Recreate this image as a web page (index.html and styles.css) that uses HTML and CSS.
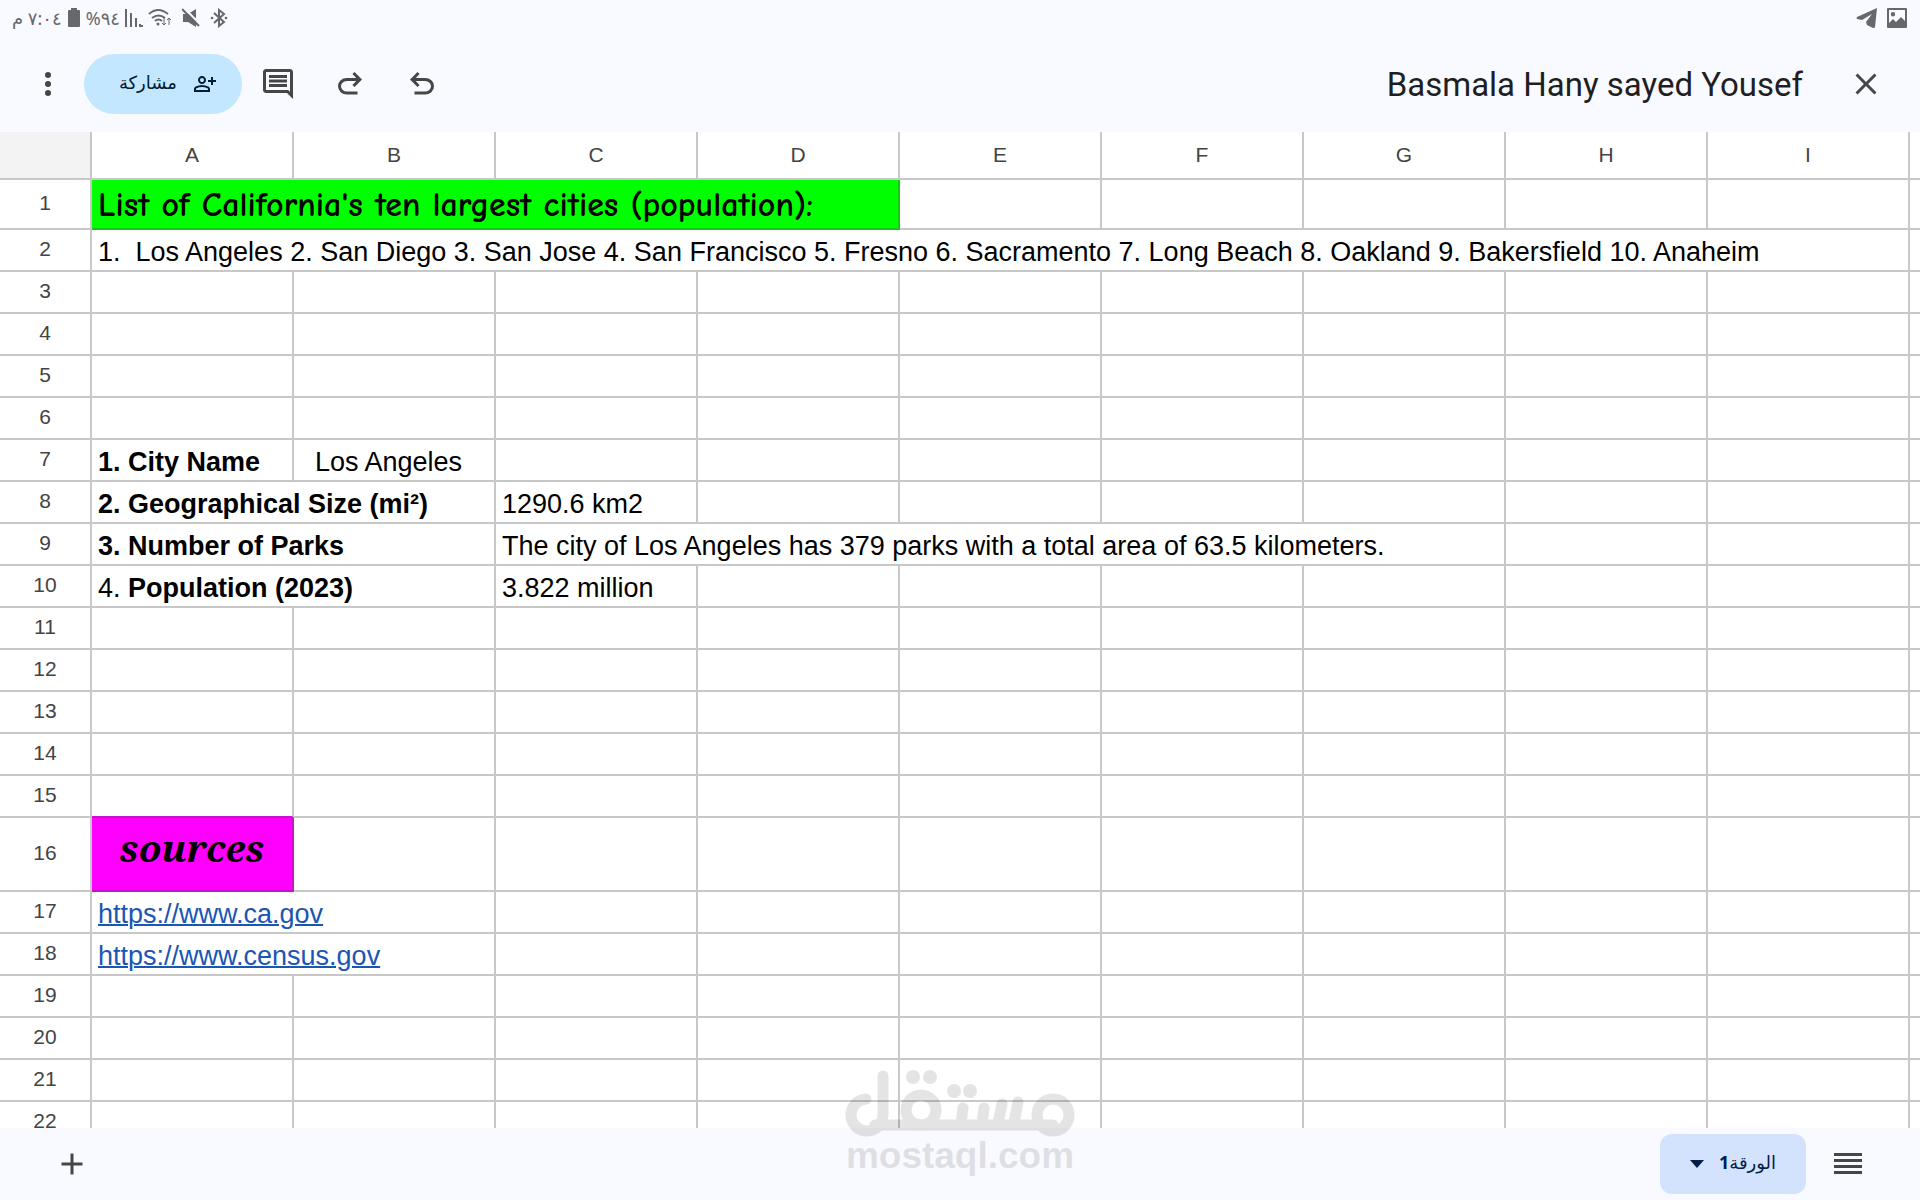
FILE: index.html
```
<!DOCTYPE html>
<html lang="ar" dir="rtl">
<head>
  <meta charset="utf-8">
  <title>Basmala Hany sayed Yousef</title>
  <link rel="stylesheet" href="styles.css">
</head>
<body>
  <div class="status-bar">
    <div class="status-group">
      <svg width="22" height="22" viewBox="0 0 22 22"><path fill-rule="evenodd" d="M2 1h18q1 0 1 1v18q0 1-1 1H2q-1 0-1-1V2q0-1 1-1zM3 3v13l4-4 3 3 5-5 4 4V3zM7 5a2.200 2.200 0 1 1 0 4.400a2.200 2.200 0 0 1 0-4.400z"/></svg>
      <svg width="22" height="22" viewBox="0 0 22 22"><path d="M21 1L1 10q-1 1 0 2l5 1L16 7l-6 8 1 3 6 3q2 0 2-1z"/></svg>
    </div>
    <div class="status-group left">
      <svg width="18" height="20" viewBox="0 0 18 20"><path class="line" d="M4 5l10 9-5 4V2l5 4-10 9"/><circle cx="2" cy="10" r="1.300"/><circle cx="16" cy="10" r="1.300"/></svg>
      <svg class="mute" width="18" height="20" viewBox="0 0 18 20"><path d="M1 6h5l8-5v18l-8-5H1z"/><path class="slash" d="M2 0l17 17"/><path class="line" d="M0 1l17 17"/></svg>
      <svg width="24" height="20" viewBox="0 0 24 20"><path class="line" d="M1 6q9-8 19 0M4 10q6.500-5 13 0M7 13q3.500-3 7 0"/><circle cx="10" cy="16" r="1.500"/><path class="thin" d="M16 10v7m-2-2l2 2 2-2M21 17v-7m-2 2l2-2 2 2"/></svg>
      <svg class="signal" width="18" height="18" viewBox="0 0 18 18"><path class="line" d="M1 0v18M6 4v14M11 9v9M15 15v3M17 16v2"/></svg>
      <span>٩٤%</span>
      <svg width="14" height="20" viewBox="0 0 14 20"><path d="M4 0h6v2h2q1 0 1 1v15q0 1-1 1H2q-1 0-1-1V3q0-1 1-1h2z"/></svg>
      <span>٧:٠٤ م</span>
    </div>
  </div>

  <header class="toolbar">
    <button class="icon-btn" aria-label="إغلاق">
      <svg viewBox="0 0 24 24"><path d="M19 6.410L17.590 5 12 10.590 6.410 5 5 6.410 10.590 12 5 17.590 6.410 19 12 13.410 17.590 19 19 17.590 13.410 12z"/></svg>
    </button>
    <h1>Basmala Hany sayed Yousef</h1>
    <button class="icon-btn" aria-label="تراجع">
      <svg viewBox="0 -960 960 960"><path d="M280-200v-80h284q63 0 109.500-40T720-420q0-60-46.500-100T564-560H312l104 104-56 56-200-200 200-200 56 56-104 104h252q97 0 166.500 63T800-420q0 94-69.500 157T564-200H280Z"/></svg>
    </button>
    <button class="icon-btn" aria-label="إعادة">
      <svg viewBox="0 -960 960 960"><path d="M396-200q-97 0-166.500-63T160-420q0-94 69.500-157T396-640h252L544-744l56-56 200 200-200 200-56-56 104-104H396q-63 0-109.500 40T240-420q0 60 46.500 100T396-280h284v80H396Z"/></svg>
    </button>
    <button class="icon-btn" aria-label="تعليقات">
      <svg viewBox="0 0 24 24"><path d="M21.990 4c0-1.100-.89-2-1.990-2H4c-1.100 0-2 .9-2 2v12c0 1.100.9 2 2 2h14l4 4-.01-18zM20 4v13.170L18.830 16H4V4h16zM6 12h12v2H6zm0-3h12v2H6zm0-3h12v2H6z"/></svg>
    </button>
    <button class="share-btn">
      <svg viewBox="0 -960 960 960"><path d="M720-440v-120H600v-80h120v-120h80v120h120v80H800v120h-80Zm-360-40q-66 0-113-47t-47-113q0-66 47-113t113-47q66 0 113 47t47 113q0 66-47 113t-113 47ZM40-160v-112q0-34 17.500-62.500T104-378q62-31 126-46.500T360-440q66 0 130 15.500T616-378q29 15 46.500 43.500T680-272v112H40Zm80-80h480v-32q0-11-5.500-20T580-306q-54-27-109-40.500T360-360q-56 0-111 13.500T140-306q-9 5-14.500 14t-5.500 20v32Zm240-320q33 0 56.500-23.500T440-640q0-33-23.500-56.500T360-720q-33 0-56.500 23.500T280-640q0 33 23.500 56.500T360-560Z"/></svg>
      <span>مشاركة</span>
    </button>
    <button class="icon-btn" aria-label="المزيد">
      <svg viewBox="0 0 24 24"><circle cx="12" cy="6" r="2"/><circle cx="12" cy="12" r="2"/><circle cx="12" cy="18" r="2"/></svg>
    </button>
  </header>

  <main class="sheet" dir="ltr" lang="en">
    <table>
      <colgroup>
        <col class="col-num">
        <col class="col-data" span="9">
        <col>
      </colgroup>
      <thead>
        <tr><td class="corner"></td><th>A</th><th>B</th><th>C</th><th>D</th><th>E</th><th>F</th><th>G</th><th>H</th><th>I</th><th></th></tr>
      </thead>
      <tbody>
        <tr class="title-row"><th>1</th><td class="list-title" colspan="4">List of California's ten largest cities (population):</td><td></td><td></td><td></td><td></td><td></td><td></td></tr>
        <tr><th>2</th><td colspan="9">1.&nbsp; Los Angeles 2. San Diego 3. San Jose 4. San Francisco 5. Fresno 6. Sacramento 7. Long Beach 8. Oakland 9. Bakersfield 10. Anaheim</td><td></td></tr>
        <tr><th>3</th><td></td><td></td><td></td><td></td><td></td><td></td><td></td><td></td><td></td><td></td></tr>
        <tr><th>4</th><td></td><td></td><td></td><td></td><td></td><td></td><td></td><td></td><td></td><td></td></tr>
        <tr><th>5</th><td></td><td></td><td></td><td></td><td></td><td></td><td></td><td></td><td></td><td></td></tr>
        <tr><th>6</th><td></td><td></td><td></td><td></td><td></td><td></td><td></td><td></td><td></td><td></td></tr>
        <tr><th>7</th><td><b>1. City Name</b></td><td>&nbsp;&nbsp;Los Angeles</td><td></td><td></td><td></td><td></td><td></td><td></td><td></td><td></td></tr>
        <tr><th>8</th><td colspan="2"><b>2. Geographical Size (mi²)</b></td><td>1290.6 km2</td><td></td><td></td><td></td><td></td><td></td><td></td><td></td></tr>
        <tr><th>9</th><td colspan="2"><b>3. Number of Parks</b></td><td colspan="5">The city of Los Angeles has 379 parks with a total area of 63.5 kilometers.</td><td></td><td></td><td></td></tr>
        <tr><th>10</th><td colspan="2">4. <b>Population (2023)</b></td><td>3.822 million</td><td></td><td></td><td></td><td></td><td></td><td></td><td></td></tr>
        <tr><th>11</th><td></td><td></td><td></td><td></td><td></td><td></td><td></td><td></td><td></td><td></td></tr>
        <tr><th>12</th><td></td><td></td><td></td><td></td><td></td><td></td><td></td><td></td><td></td><td></td></tr>
        <tr><th>13</th><td></td><td></td><td></td><td></td><td></td><td></td><td></td><td></td><td></td><td></td></tr>
        <tr><th>14</th><td></td><td></td><td></td><td></td><td></td><td></td><td></td><td></td><td></td><td></td></tr>
        <tr><th>15</th><td class="above-sources"></td><td></td><td></td><td></td><td></td><td></td><td></td><td></td><td></td><td></td></tr>
        <tr class="sources-row"><th>16</th><td class="sources">sources</td><td></td><td></td><td></td><td></td><td></td><td></td><td></td><td></td><td></td></tr>
        <tr><th>17</th><td colspan="2"><a href="https://www.ca.gov">https://www.ca.gov</a></td><td></td><td></td><td></td><td></td><td></td><td></td><td></td><td></td></tr>
        <tr><th>18</th><td colspan="2"><a href="https://www.census.gov">https://www.census.gov</a></td><td></td><td></td><td></td><td></td><td></td><td></td><td></td><td></td></tr>
        <tr><th>19</th><td></td><td></td><td></td><td></td><td></td><td></td><td></td><td></td><td></td><td></td></tr>
        <tr><th>20</th><td></td><td></td><td></td><td></td><td></td><td></td><td></td><td></td><td></td><td></td></tr>
        <tr><th>21</th><td></td><td></td><td></td><td></td><td></td><td></td><td></td><td></td><td></td><td></td></tr>
        <tr><th>22</th><td></td><td></td><td></td><td></td><td></td><td></td><td></td><td></td><td></td><td></td></tr>
      </tbody>
    </table>
  </main>

  <footer class="tabs">
    <button class="icon-btn" aria-label="كل الأوراق">
      <svg viewBox="0 0 36 36"><path d="M4 7h28v3H4zM4 13h28v3H4zM4 19h28v3H4zM4 25h28v3H4z"/></svg>
    </button>
    <button class="sheet-tab">
      <span>الورقة<b>1</b></span>
      <svg width="14" height="8" viewBox="0 0 14 8"><path d="M0 0h14L7 8z"/></svg>
    </button>
    <button class="icon-btn add" aria-label="إضافة ورقة">
      <svg viewBox="0 0 24 24"><path d="M19 13h-6v6h-2v-6H5v-2h6V5h2v6h6v2z"/></svg>
    </button>
  </footer>

  <div class="watermark" dir="ltr">
    <svg width="230" height="68" viewBox="0 0 230 68">
      <g class="strokes">
        <path d="M21 29A16 16 0 1 0 38 45V6"/>
        <path d="M30 55H208"/>
        <circle cx="76" cy="40" r="15"/>
        <circle cx="208" cy="45" r="16"/>
        <path d="M116 53l2-15M137 53l2-15M153 53l4-19M169 53l4-21"/>
      </g>
      <circle cx="68" cy="7" r="7"/><circle cx="85" cy="7" r="7"/>
      <circle cx="109" cy="21" r="7"/><circle cx="125" cy="21" r="7"/>
    </svg>
    <span>mostaql.com</span>
  </div>
</body>
</html>
```
FILE: styles.css
```
:root {
  --chrome: #f9faff;
  --grid: #c8c8c8;
  --icon: #444746;
  --status: #66686b;
  --navy: #041e49;
}

* {
  box-sizing: border-box;
}

body {
  margin: 0;
  height: 100vh;
  display: flex;
  flex-direction: column;
  overflow: hidden;
  position: relative;
  background: var(--chrome);
  font-family: "Liberation Sans", Arial, sans-serif;
}

button {
  border: none;
  background: none;
  padding: 0;
  font: inherit;
  cursor: pointer;
}

/* Status bar */
.status-bar {
  display: flex;
  justify-content: space-between;
  align-items: center;
  height: 36px;
  padding: 0 12px;
  color: var(--status);
  font-family: "Noto Sans", "DejaVu Sans", sans-serif;
  font-size: 18px;
  line-height: 36px;
}

.status-group {
  display: flex;
  align-items: center;
  gap: 8px;
}

.status-group.left {
  gap: 5px;
}

.status-group svg {
  fill: var(--status);
}

.status-group .mute {
  margin: 0 5px;
}

.status-group .line,
.status-group .thin {
  fill: none;
  stroke: var(--status);
  stroke-width: 2;
}

.status-group .thin {
  stroke-width: 1;
}

.status-group .slash {
  stroke: var(--chrome);
  stroke-width: 2;
}

/* Toolbar */
.toolbar {
  display: flex;
  align-items: center;
  height: 96px;
  padding: 0 18px 0 12px;
}

.toolbar h1 {
  flex: 1;
  margin: 0 27px 0 0;
  color: #1f1f1f;
  font-family: "Google Sans", Roboto, sans-serif;
  font-size: 33px;
  font-weight: 400;
}

.icon-btn {
  display: flex;
  align-items: center;
  justify-content: center;
  width: 72px;
  height: 60px;
}

.icon-btn svg {
  width: 36px;
  height: 36px;
  fill: var(--icon);
}

.share-btn {
  display: flex;
  align-items: center;
  gap: 16px;
  width: 158px;
  height: 60px;
  padding-right: 25px;
  border-radius: 30px;
  background: #c2e7ff;
  color: #001d35;
  font-family: "Noto Sans", "DejaVu Sans", sans-serif;
  font-size: 18px;
}

.share-btn span,
.sheet-tab span {
  padding-bottom: 4px;
}

.share-btn svg {
  width: 24px;
  height: 24px;
  fill: #001d35;
}

/* Grid */
.sheet {
  flex: 1;
  min-height: 0;
  overflow: hidden;
  background: white;
}

table {
  width: 100%;
  table-layout: fixed;
  border-collapse: separate;
  border-spacing: 0;
}

.col-num {
  width: 92px;
}

.col-data {
  width: 202px;
}

th,
td {
  padding: 0;
  border-right: 2px solid var(--grid);
  border-bottom: 2px solid var(--grid);
  white-space: nowrap;
}

th:last-child,
td:last-child {
  border-right: none;
}

th {
  color: #444;
  font-size: 21px;
  font-weight: 400;
  line-height: 24px;
  text-align: center;
}

thead tr {
  height: 48px;
}

.corner {
  background: #f3f3f3;
}

tbody tr {
  height: 42px;
}

tbody th {
  padding-bottom: 2px;
}

tbody td {
  padding: 0 6px 3px;
  color: black;
  font-size: 27px;
  line-height: 30px;
  vertical-align: bottom;
}

.title-row {
  height: 50px;
}

tbody td.list-title {
  padding-bottom: 8px;
  border-color: #14c814;
  background: #00ff00;
  font-family: "Comic Sans MS", "Comic Neue", cursive;
  font-weight: 700;
  font-size: 34px;
}

.sources-row {
  height: 74px;
}

.above-sources {
  border-bottom-color: #c814c8;
}

tbody td.sources {
  padding-bottom: 20px;
  border-color: #c814c8;
  background: #ff00ff;
  font-family: "Noto Serif", "Liberation Serif", serif;
  font-size: 37px;
  font-style: italic;
  font-weight: 700;
  line-height: 44px;
  text-align: center;
}

td a {
  color: #1a56b4;
  text-decoration-thickness: 2px;
}

/* Sheet tabs */
.tabs {
  display: flex;
  align-items: center;
  gap: 6px;
  height: 72px;
  padding: 0 36px;
}

.sheet-tab {
  display: flex;
  align-items: center;
  justify-content: space-between;
  width: 146px;
  height: 60px;
  padding: 0 30px;
  border-radius: 12px;
  background: #d3e3fd;
  color: var(--navy);
  font-family: "Noto Sans", "DejaVu Sans", sans-serif;
  font-size: 18px;
}

.sheet-tab svg {
  fill: var(--navy);
}

.add {
  margin-right: auto;
}

/* Watermark over the bottom of the grid */
.watermark {
  position: absolute;
  bottom: 26px;
  left: 50%;
  transform: translateX(-50%);
  display: flex;
  flex-direction: column;
  align-items: center;
  opacity: 0.1;
  color: black;
  font-size: 37px;
  font-weight: 700;
  line-height: 36px;
  pointer-events: none;
}

.watermark svg {
  overflow: visible;
}

.watermark .strokes {
  fill: none;
  stroke: black;
  stroke-width: 11;
  stroke-linecap: round;
}
```
